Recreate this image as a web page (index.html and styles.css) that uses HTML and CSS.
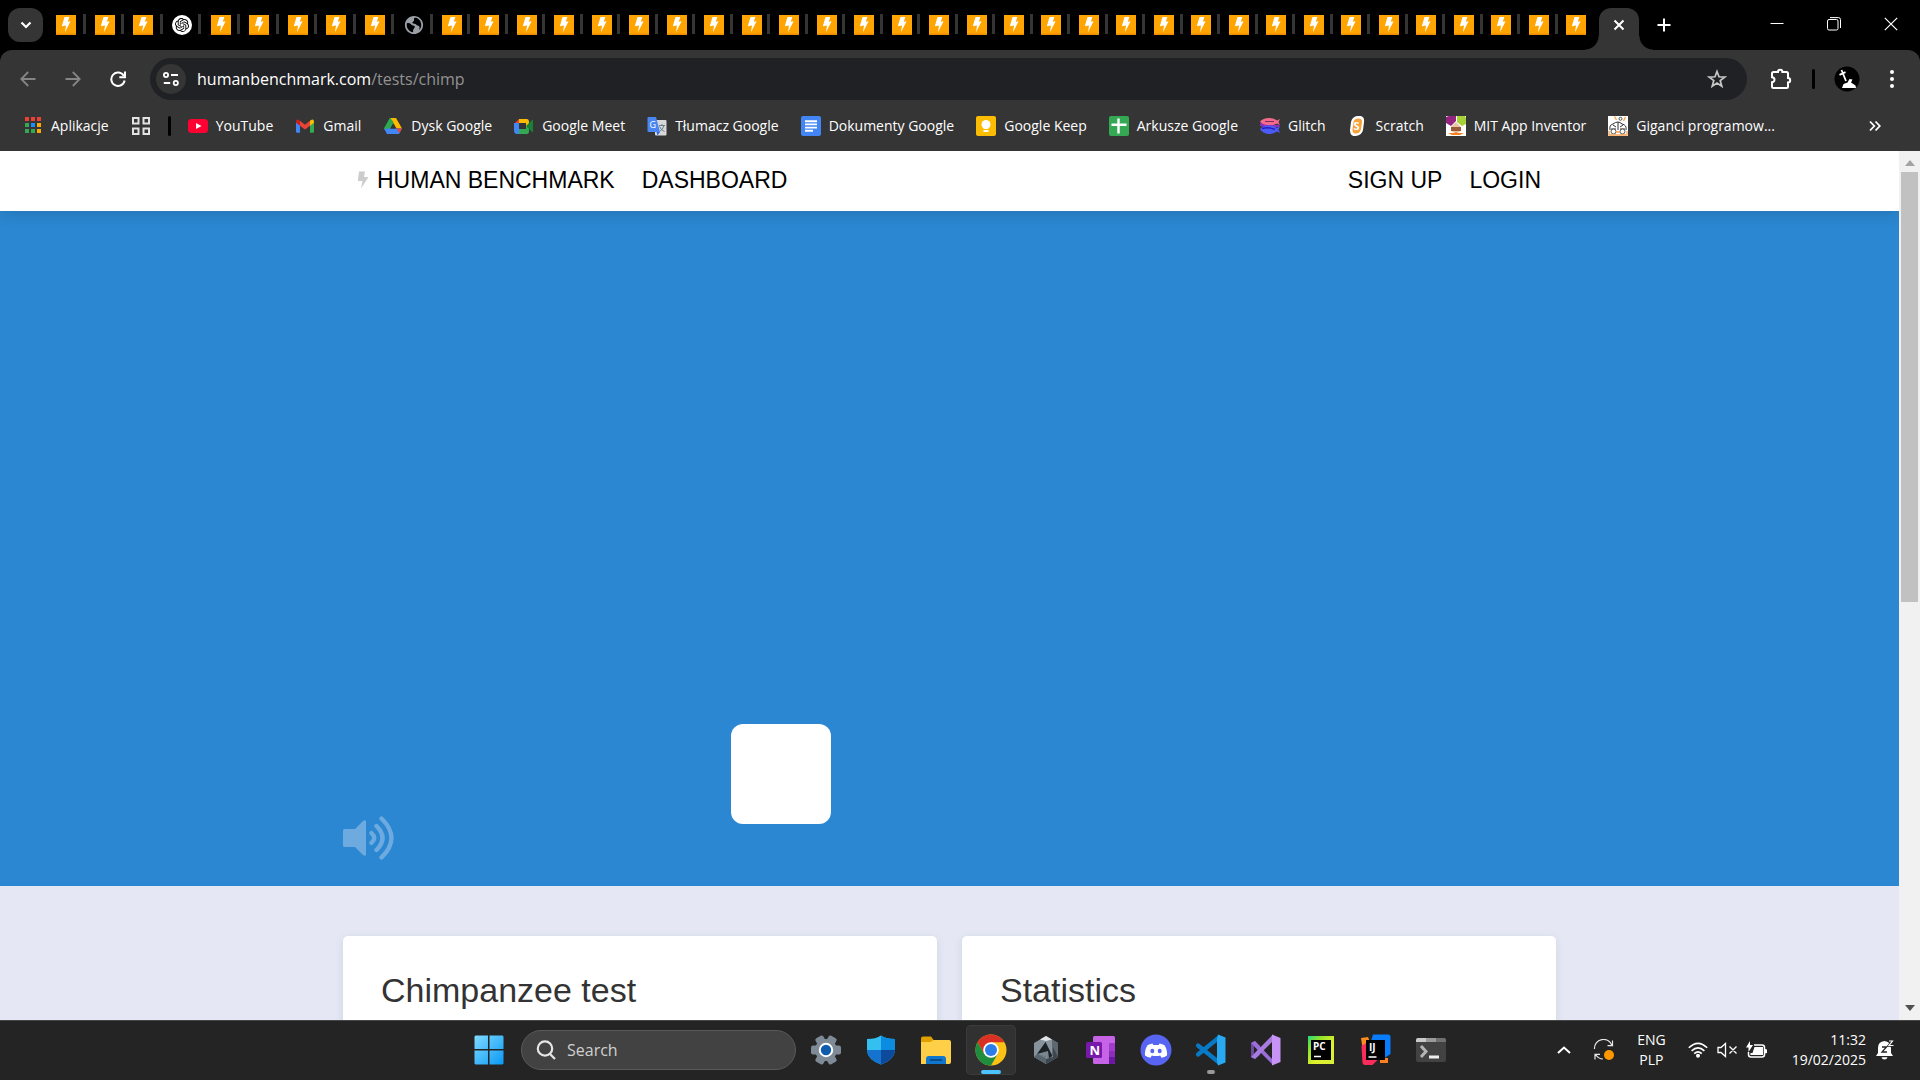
FILE: index.html
```html
<!DOCTYPE html>
<html lang="en">
<head>
<meta charset="utf-8">
<meta name="viewport" content="width=device-width, initial-scale=1">
<title>Human Benchmark</title>
<link rel="stylesheet" href="styles.css">
</head>
<body>
<svg class="sprite" aria-hidden="true">
  <symbol id="fav" viewBox="0 0 20 20"><path fill="#ffa400" d="M0 0h20v20H0z"/><path fill="#f08c00" d="M0 18.500h20V20H0z"/><path fill="#fff" d="M8.500 2h4.800l-1.500 4.800 2.800-.5L9 17.200l1-6.800-4.200.8z"/></symbol>
</svg>

<header class="browser">
  <div class="strip">
    <button class="search-tabs" aria-label="Search tabs"><svg width="12" height="8" viewBox="0 0 12 8"><path d="M1.500 1.500 6 6l4.500-4.500" fill="none" stroke="#fff" stroke-width="2.200"/></svg></button>
    <div class="tabs tabs-wide">
      <button class="tab" aria-label="Tab"><svg class="i20"><use href="#fav"/></svg></button>
      <button class="tab" aria-label="Tab"><svg class="i20"><use href="#fav"/></svg></button>
      <button class="tab" aria-label="Tab"><svg class="i20"><use href="#fav"/></svg></button>
      <button class="tab" aria-label="Tab"><svg class="i20" viewBox="0 0 20 20"><circle cx="10" cy="10" r="10" fill="#fff"/><svg x="3" y="3" width="14" height="14" viewBox="0 0 24 24"><path d="M22.2819 9.8211a5.9847 5.9847 0 0 0-.5157-4.9108 6.0462 6.0462 0 0 0-6.5098-2.9A6.0651 6.0651 0 0 0 4.9807 4.1818a5.9847 5.9847 0 0 0-3.9977 2.9 6.0462 6.0462 0 0 0 .7427 7.0966 5.98 5.98 0 0 0 .511 4.9107 6.051 6.051 0 0 0 6.5146 2.9001A5.9847 5.9847 0 0 0 13.2599 24a6.0557 6.0557 0 0 0 5.7718-4.2058 5.9894 5.9894 0 0 0 3.9977-2.9001 6.0557 6.0557 0 0 0-.7475-7.0729zm-9.022 12.6081a4.4755 4.4755 0 0 1-2.8764-1.0408l.1419-.0804 4.7783-2.7582a.7948.7948 0 0 0 .3927-.6813v-6.7369l2.02 1.1686a.071.071 0 0 1 .038.052v5.5826a4.504 4.504 0 0 1-4.4945 4.4944zm-9.6607-4.1254a4.4708 4.4708 0 0 1-.5346-3.0137l.142.0852 4.783 2.7582a.7712.7712 0 0 0 .7806 0l5.8428-3.3685v2.3324a.0804.0804 0 0 1-.0332.0615L9.74 19.9502a4.4992 4.4992 0 0 1-6.1408-1.6464zM2.3408 7.8956a4.485 4.485 0 0 1 2.3655-1.9728V11.6a.7664.7664 0 0 0 .3879.6765l5.8144 3.3543-2.0201 1.1685a.0757.0757 0 0 1-.071 0l-4.8303-2.7865A4.504 4.504 0 0 1 2.3408 7.872zm16.5963 3.8558L13.1038 8.364 15.1192 7.2a.0757.0757 0 0 1 .071 0l4.8303 2.7913a4.4944 4.4944 0 0 1-.6765 8.1042v-5.6772a.79.79 0 0 0-.407-.667zm2.0107-3.0231l-.142-.0852-4.7735-2.7818a.7759.7759 0 0 0-.7854 0L9.409 9.2297V6.8974a.0662.0662 0 0 1 .0284-.0615l4.8303-2.7866a4.4992 4.4992 0 0 1 6.6802 4.66zM8.3065 12.863l-2.02-1.1638a.0804.0804 0 0 1-.038-.0567V6.0742a4.4992 4.4992 0 0 1 7.3757-3.4537l-.142.0805L8.704 5.459a.7948.7948 0 0 0-.3927.6813zm1.0976-2.3654l2.602-1.4998 2.6069 1.4998v2.9994l-2.5974 1.4997-2.6067-1.4997Z"/></svg></svg></button>
      <button class="tab" aria-label="Tab"><svg class="i20"><use href="#fav"/></svg></button>
      <button class="tab" aria-label="Tab"><svg class="i20"><use href="#fav"/></svg></button>
      <button class="tab" aria-label="Tab"><svg class="i20"><use href="#fav"/></svg></button>
      <button class="tab" aria-label="Tab"><svg class="i20"><use href="#fav"/></svg></button>
      <button class="tab" aria-label="Tab"><svg class="i20"><use href="#fav"/></svg></button>
      <button class="tab" aria-label="Tab"><svg class="i20" viewBox="1 1 22 22"><path fill="#9aa0a6" d="M12 2C6.480 2 2 6.480 2 12s4.480 10 10 10 10-4.480 10-10S17.520 2 12 2zm-1 17.930c-3.950-.49-7-3.850-7-7.930 0-.62.08-1.210.21-1.790 2.800-1 4.300.6 5.200 1.800.6.800 2.500.3 3.300 1.300.9 1.100-.7 1.900-.7 2.600 0 .8-1 1-1 2v2zm6.900-2.540c-.26-.81.300-2 .300-3.100 0-1.800-2.500-1.300-3.600-2.700-1.200-1.500-3.300-.7-4.300-1.900-.8-1 1.700-1.300 1.700-2.300V5c0-.6 1-1 2-.9 3.500.8 6 4 6 7.900 0 2.080-.8 3.970-2.100 5.390z"/></svg></button>
    </div>
    <div class="tabs tabs-narrow">
      <button class="tab" aria-label="Tab"><svg class="i20"><use href="#fav"/></svg></button>
      <button class="tab" aria-label="Tab"><svg class="i20"><use href="#fav"/></svg></button>
      <button class="tab" aria-label="Tab"><svg class="i20"><use href="#fav"/></svg></button>
      <button class="tab" aria-label="Tab"><svg class="i20"><use href="#fav"/></svg></button>
      <button class="tab" aria-label="Tab"><svg class="i20"><use href="#fav"/></svg></button>
      <button class="tab" aria-label="Tab"><svg class="i20"><use href="#fav"/></svg></button>
      <button class="tab" aria-label="Tab"><svg class="i20"><use href="#fav"/></svg></button>
      <button class="tab" aria-label="Tab"><svg class="i20"><use href="#fav"/></svg></button>
      <button class="tab" aria-label="Tab"><svg class="i20"><use href="#fav"/></svg></button>
      <button class="tab" aria-label="Tab"><svg class="i20"><use href="#fav"/></svg></button>
      <button class="tab" aria-label="Tab"><svg class="i20"><use href="#fav"/></svg></button>
      <button class="tab" aria-label="Tab"><svg class="i20"><use href="#fav"/></svg></button>
      <button class="tab" aria-label="Tab"><svg class="i20"><use href="#fav"/></svg></button>
      <button class="tab" aria-label="Tab"><svg class="i20"><use href="#fav"/></svg></button>
      <button class="tab" aria-label="Tab"><svg class="i20"><use href="#fav"/></svg></button>
      <button class="tab" aria-label="Tab"><svg class="i20"><use href="#fav"/></svg></button>
      <button class="tab" aria-label="Tab"><svg class="i20"><use href="#fav"/></svg></button>
      <button class="tab" aria-label="Tab"><svg class="i20"><use href="#fav"/></svg></button>
      <button class="tab" aria-label="Tab"><svg class="i20"><use href="#fav"/></svg></button>
      <button class="tab" aria-label="Tab"><svg class="i20"><use href="#fav"/></svg></button>
      <button class="tab" aria-label="Tab"><svg class="i20"><use href="#fav"/></svg></button>
      <button class="tab" aria-label="Tab"><svg class="i20"><use href="#fav"/></svg></button>
      <button class="tab" aria-label="Tab"><svg class="i20"><use href="#fav"/></svg></button>
      <button class="tab" aria-label="Tab"><svg class="i20"><use href="#fav"/></svg></button>
      <button class="tab" aria-label="Tab"><svg class="i20"><use href="#fav"/></svg></button>
      <button class="tab" aria-label="Tab"><svg class="i20"><use href="#fav"/></svg></button>
      <button class="tab" aria-label="Tab"><svg class="i20"><use href="#fav"/></svg></button>
      <button class="tab" aria-label="Tab"><svg class="i20"><use href="#fav"/></svg></button>
      <button class="tab" aria-label="Tab"><svg class="i20"><use href="#fav"/></svg></button>
      <button class="tab" aria-label="Tab"><svg class="i20"><use href="#fav"/></svg></button>
      <button class="tab" aria-label="Tab"><svg class="i20"><use href="#fav"/></svg></button>
    </div>
    <button class="tab-active" aria-label="Close tab"><svg width="12" height="12" viewBox="0 0 12 12"><path d="m1.500 1.500 9 9m0-9-9 9" stroke="#fff" stroke-width="2"/></svg></button>
    <button class="new-tab" aria-label="New tab"><svg width="14" height="14" viewBox="0 0 14 14"><path d="M7 .5v13M.5 7h13" stroke="#fff" stroke-width="2"/></svg></button>
    <div class="window-controls">
      <button aria-label="Minimize"><svg width="14" height="14" viewBox="0 0 14 14"><path d="M.5 6.500h13" stroke="#fff"/></svg></button>
      <button aria-label="Restore"><svg width="14" height="14" viewBox="0 0 14 14" fill="none" stroke="#fff"><rect x=".5" y="2.500" width="10.500" height="10.500" rx="1.500"/><path d="M3 .6h8.500a2 2 0 0 1 2 2V11"/></svg></button>
      <button aria-label="Close"><svg width="14" height="14" viewBox="0 0 14 14"><path d="m.8.8 12.400 12.400m0-12.400L.8 13.200" stroke="#fff" stroke-width="1.200"/></svg></button>
    </div>
  </div>

  <div class="toolbar">
    <div class="nav-buttons">
      <button aria-label="Back"><svg width="16" height="16" viewBox="0 0 16 16" fill="none" stroke="#858585" stroke-width="1.800"><path d="M15.500 8H1.500M8.200 1 1.300 8l6.900 7"/></svg></button>
      <button aria-label="Forward"><svg width="16" height="16" viewBox="0 0 16 16" fill="none" stroke="#858585" stroke-width="1.800"><path d="M.5 8h14M7.800 1l6.900 7-6.900 7"/></svg></button>
      <button aria-label="Reload"><svg width="16" height="16" viewBox="0 0 16 16" fill="none" stroke="#fff" stroke-width="2"><path d="M13.800 4.800A6.700 6.700 0 1 0 14.600 9.500M15 .5v5.700H9.300"/></svg></button>
    </div>
    <div class="omnibox">
      <button class="site-info" aria-label="Site information"><svg width="16" height="14" viewBox="0 0 16 14" fill="none" stroke="#fff" stroke-width="1.800"><circle cx="3" cy="3" r="2.100"/><path d="M8 3h7M.8 11h6.400"/><circle cx="12.800" cy="11" r="2.100"/></svg></button>
      <a class="url" href="#">humanbenchmark.com<span>/tests/chimp</span></a>
      <button class="star" aria-label="Bookmark this tab"><svg width="20" height="20" viewBox="0 0 20 20" fill="none" stroke="#c7c7c7" stroke-width="1.700"><path d="m10 2.500 2 5.300 5.700.3-4.500 3.500 1.600 5.600L10 14l-4.800 3.200 1.600-5.600-4.500-3.500 5.700-.3z"/></svg></button>
    </div>
    <div class="toolbar-end">
      <button class="ext" aria-label="Extensions"><svg width="22" height="22" viewBox="0 0 22 22"><path d="M2 5.500q0-1.500 1.500-1.500h4.500a2.200 2.200 0 0 1 4.400 0h4.100q1.500 0 1.500 1.500v4.500a2.200 2.200 0 0 1 0 4.400v4.100q0 1.500-1.500 1.500h-13Q2 20 2 18.500v-4.200a2.500 2.500 0 0 0 0-5z" fill="none" stroke="#fff" stroke-width="2"/></svg></button>
      <span class="divider"></span>
      <button class="avatar" aria-label="Profile"><svg width="26" height="26" viewBox="0 0 26 26"><circle cx="13" cy="13" r="12.500" fill="#000"/><path d="M8 22l1.500-4 4-1.500 2-3.500 3 .5-1.500 3 4.500 3 .5 2.500z" fill="#fff"/><path d="m7.500 4 4.500 11M5.500 8.800l6-2.600" stroke="#fff" stroke-width="1.800"/></svg></button>
      <button class="menu" aria-label="Menu"><svg width="6" height="20" viewBox="0 0 6 20" fill="#fff"><circle cx="3" cy="3" r="2"/><circle cx="3" cy="10" r="2"/><circle cx="3" cy="17" r="2"/></svg></button>
    </div>
  </div>

  <nav class="bookmarks" aria-label="Bookmarks">
    <a href="#"><svg class="i20" viewBox="0 0 20 20"><path fill="#ea4335" d="M2 1h4v4H2zM8 1h4v4H8zM14 1h4v4h-4z"/><path fill="#34a853" d="M2 7h4v4H2zM2 13h4v4H2zM8 13h4v4H8z"/><path fill="#1a8cff" d="M8 7h4v4H8z"/><path fill="#fbaa05" d="M14 7h4v4h-4zM14 13h4v4h-4z"/></svg>Aplikacje</a>
    <a href="#" aria-label="Tab groups"><svg class="i20" viewBox="0 0 20 20" fill="none" stroke="#e3e3e3" stroke-width="2"><path d="M2 2h5.500v5.500H2zM12.500 2H18v5.500h-5.500zM2 12.500h5.500V18H2zM12.500 12.500H18V18h-5.500z"/></svg></a>
    <span class="divider"></span>
    <a href="#"><svg class="i20" viewBox="0 0 20 20"><rect y="3" width="20" height="14" rx="3.500" fill="#ff0033"/><path d="m8 7 5.500 3L8 13z" fill="#fff"/></svg>YouTube</a>
    <a href="#"><svg class="i20" viewBox="0 0 20 20"><path fill="#4285f4" d="M1 5.500 5 8v8.800H2.200Q1 16.800 1 15.600z"/><path fill="#34a853" d="M19 5.500 15 8v8.800h2.800q1.200 0 1.200-1.200z"/><path fill="#ea4335" d="m5 4.800 5 3.900 5-3.900v4.900l-5 3.900-5-3.900z"/><path fill="#c5221f" d="M1 5.500q.3-3 3-1.500l1 .8v4.900L1 6.800z"/><path fill="#fbbc04" d="M19 5.500q-.3-3-3-1.500l-1 .8v4.900l4-2.900z"/></svg>Gmail</a>
    <a href="#"><svg class="i20" viewBox="0 0 20 20"><path fill="#2da94f" d="M7 2h3l1.200 4L4.700 16.800 1 12.500z"/><path fill="#ffba00" d="M7.500 2H13l6 10.500h-5.500z"/><path fill="#4285f4" d="M4.500 12.500H19L16 18H4L1 12.500z"/><path fill="#2da94f" d="m1 12.500 3.500 0L10.500 6 7 2z"/><path fill="#ea4335" d="m13.500 12.500 5.500 0-2.500 4.500z"/><path fill="#353535" d="m10 8 2.700 4.500H7.300z"/></svg>Dysk Google</a>
    <a href="#"><svg class="i20" viewBox="0 0 20 20"><path fill="#ea4335" d="M5 3v5H0z"/><path fill="#4285f4" d="M0 7h5v7h0v4H2q-2-1-2-3z"/><path fill="#34a853" d="M5 13h7V9l3 1.500V15q0 3-2 3H5z"/><path fill="#fbbc04" d="M5 3h8q2 0 2 2.500V9l-3 2V7H5z"/><path fill="#188038" d="m12 10 6-6q1 0 1 1v11l-1 0z"/></svg>Google Meet</a>
    <a href="#"><svg class="i20" viewBox="0 0 20 20"><rect x="8" y="4" width="11.500" height="15.500" rx="1" fill="#d8d8d8"/><path d="M12 9.500h6M15 8v1.500m2 0q-1 4-4.500 6m0-5q1.500 3.500 5 5" stroke="#6a7f90" fill="none"/><path d="M1.500 1H9l4 15H1.500Q.5 16 .5 15V2q0-1 1-1z" fill="#4a86f0"/><path d="m9.500 16h3.500l-2.500 3.500z" fill="#3367d6"/><text x="2.500" y="11.500" font-size="9" fill="#fff">G</text></svg>Tłumacz Google</a>
    <a href="#"><svg class="i20" viewBox="0 0 20 20"><rect width="20" height="20" rx="2" fill="#4285f4"/><path d="M4 5.200h12M4 8.400h12M4 11.600h12M4 14.800h8" stroke="#fff" stroke-width="1.900"/></svg>Dokumenty Google</a>
    <a href="#"><svg class="i20" viewBox="0 0 20 20"><rect width="20" height="20" rx="2" fill="#fbbc04"/><circle cx="10" cy="8.500" r="4.500" fill="#fff"/><path d="M7.500 10h5v2.600h-5zM7.500 14h5v2h-5z" fill="#fff"/></svg>Google Keep</a>
    <a href="#"><svg class="i20" viewBox="0 0 20 20"><rect width="20" height="20" rx="2" fill="#34a853"/><path d="M9.500 2.500v15M2.500 8.700h15" stroke="#fff" stroke-width="2.400"/></svg>Arkusze Google</a>
    <a href="#"><svg class="i20" viewBox="0 0 20 20"><path d="M0 5.500Q3 2 9 2q5 0 8 2.500L20 3l-1.500 3L20 9l-3-1.500Q12 10 7 9.500 2 9 0 5.500z" fill="#f66a8c"/><path d="M0 7q7 3.500 19.500 1.500V11L8 12l-8-2z" fill="#8a2fc4"/><path d="M0 13q3-3.500 9-3.500 5 0 8 2.500l3-1.500-1.500 3L20 17l-3-1.500q-4 3-9 2.500-6-1-8-5z" fill="#4b5cf5"/><path d="M2 12.500q7-2 13 1" stroke="#2a1bc0" stroke-width="1.500" fill="none"/><path d="M5 5.500h9" stroke="#5d1a55" stroke-width=".8"/></svg>Glitch</a>
    <a href="#"><svg class="i20" viewBox="0 0 20 20"><path d="M9 0q8-1 7 6l-1 8q-1 5-7 6-6 1-6-6l1-8q1-5 6-6z" fill="#fff"/><path d="M9.500 2.500q5-.5 4.500 3.500l-1 7q-.8 4-4.500 4.500-4.500.5-4-4.500l1-7q.5-3 4-3.500z" fill="#f7a13b"/><text x="5.500" y="14" font-size="11" font-weight="700" fill="#fff">S</text></svg>Scratch</a>
    <a href="#"><svg class="i20" viewBox="0 0 20 20"><path fill="#fff" d="M0 0h20v20H0z"/><path fill="#94257f" d="M0 1l3-1h7v5L5 10 0 7z"/><path fill="#a6cf38" d="M11 0h8l1 2v6l-4 2-5-4z"/><path d="m5 11 5-5 5 5-1 5H6z" fill="#e8c6a5"/><path d="M5 11h10v4H5z" fill="#9a5a38"/><path d="M2 17h5l3-1 3 1h5l-4 2H6z" fill="#f58220"/></svg>MIT App Inventor</a>
    <a href="#"><svg class="i20" viewBox="0 0 20 20"><path fill="#fff" d="M0 0h20v20H0z"/><path d="M2 14q-1-5 3-6 5-4 9 0 5 1 4 6M10 6v8M5 9l3 2m4 0 3-2M3 13h5m4 0h5" fill="none" stroke="#333"/><path d="m8.500 4-2-3.500m9 4.500 2-4" stroke="#f7a13b" stroke-width="1.300"/><circle cx="12.500" cy="2.800" r="1.500" fill="none" stroke="#555"/><circle cx="5.500" cy="15.500" r="2.500" fill="#fff" stroke="#555"/><circle cx="14.500" cy="15.500" r="2.500" fill="#fff" stroke="#555"/><path d="M1 15v4h18v-4M8 16h4" fill="none" stroke="#f9a050" stroke-width="1.300"/></svg>Giganci programow...</a>
    <button class="more" aria-label="More bookmarks"><svg width="12" height="12" viewBox="0 0 12 12" fill="none" stroke="#fff" stroke-width="1.800"><path d="m1 1.500 4.300 4.500L1 10.500m5.500-9L10.800 6l-4.300 4.500"/></svg></button>
  </nav>
</header>

<div class="viewport">
  <main class="page">
    <nav class="site-nav">
      <div class="container">
        <a class="brand" href="#"><svg width="12" height="18" viewBox="0 0 12 18"><path fill="#ccc" d="M2 .5h6L7 6h4.500L4 17.500 5.500 10H.8z"/></svg>HUMAN BENCHMARK</a>
        <a href="#">DASHBOARD</a>
        <a class="push" href="#">SIGN UP</a>
        <a href="#">LOGIN</a>
      </div>
    </nav>
    <section class="game">
      <div class="container board">
        <button class="cell" aria-label="Square"></button>
        <button class="sound" aria-label="Sound"><svg width="52" height="44" viewBox="0 0 52 44"><path d="M1.500 13H12l7.500-7.600q3-2.500 3.500 0v33.200q-.5 2.500-3.500 0L12 31H1.500Q0 31 0 29.500v-15Q0 13 1.500 13z" fill="#6caae0"/><path d="M28.500 17.200q5.500 4.800 0 9.600M33.500 10q12 12 0 24M38.500 2.500q20 19.500 0 39" fill="none" stroke="#6caae0" stroke-width="4.400" stroke-linecap="round"/></svg></button>
      </div>
    </section>
    <section class="container cards">
      <article class="card"><h2>Chimpanzee test</h2></article>
      <article class="card"><h2>Statistics</h2></article>
    </section>
  </main>
  <div class="scrollbar">
    <svg width="10" height="6" viewBox="0 0 10 6"><path fill="#a3a3a3" d="M5 0l5 6H0z"/></svg>
    <div class="track"><div class="thumb"></div></div>
    <svg width="10" height="6" viewBox="0 0 10 6"><path fill="#505050" d="M5 6l5-6H0z"/></svg>
  </div>
</div>

<footer class="taskbar">
  <div class="apps">
    <button class="app" aria-label="Start"><svg width="30" height="30" viewBox="0 0 30 30"><defs><linearGradient id="win" x2="1" y2="1"><stop stop-color="#7fdcff"/><stop offset="1" stop-color="#0a98f5"/></linearGradient></defs><path fill="url(#win)" d="M1.500.5H14V14H.5V1.500zM15.500.5h13l1 1V14h-14zM.5 15.500H14v14H1.500l-1-1zM15.500 15.500h14v13l-1 1h-13z"/></svg></button>
    <label class="search"><svg width="20" height="20" viewBox="0 0 20 20" fill="none" stroke="#e6e6e6" stroke-width="2.200"><circle cx="9" cy="8.500" r="7.200"/><path d="m14 14 5 5"/></svg><input type="text" placeholder="Search" aria-label="Search"></label>
    <button class="app" aria-label="Settings"><svg width="32" height="32" viewBox="0 0 32 32"><g fill="#7e8b97"><circle cx="16" cy="16" r="11"/><rect x="1" y="11.500" width="30" height="9" rx="2"/><rect x="1" y="11.500" width="30" height="9" rx="2" transform="rotate(60 16 16)"/><rect x="1" y="11.500" width="30" height="9" rx="2" transform="rotate(120 16 16)"/></g><circle cx="16" cy="16" r="6.200" fill="#0f5cad" stroke="#fff" stroke-width="2"/></svg></button>
    <button class="app" aria-label="Security"><svg width="30" height="30" viewBox="0 0 30 30"><path fill="#33c0f0" d="M15 .5q5 3.500 14 3.500v12Q28 25 15 29.500 2 25 1 16V4Q10 4 15 .5z"/><path fill="#0c8ce0" d="M15 .5q5 3.500 14 3.500v11H15z"/><path fill="#1373cf" d="M1 15h14v14.500Q2 25 1 16z"/><path fill="#0d4a9c" d="M29 15H15v14.500Q28 25 29 16z"/></svg></button>
    <button class="app" aria-label="File Explorer"><svg width="30" height="30" viewBox="0 0 30 30"><path fill="#dfa000" d="M0 3.500Q0 1.500 2 1.500h8l3 4V12H0z"/><path fill="#ffcf48" d="M0 7h9.500l3-2H28q2 0 2 2v20q0 2-2 2H0z"/><path fill="#1177ce" d="M5 29v-5q0-3 3-3h14q3 0 3 3v5z"/><path d="M9 25h12" stroke="#0b3f7a" stroke-width="1.500"/></svg></button>
    <button class="app current" aria-label="Chrome"><svg width="32" height="32" viewBox="0 0 32 32"><circle cx="16" cy="16" r="15.500" fill="#fbc116"/><path fill="#d93025" d="M2.600 8.200A15.500 15.500 0 0 1 29.400 8.200H16L9.200 20z"/><path fill="#1e8e3e" d="M2.600 8.200A15.500 15.500 0 0 0 16 31.500L22.700 20H9.300z"/><circle cx="16" cy="16" r="7.800" fill="#fff"/><circle cx="16" cy="16" r="6" fill="#2b7de9"/></svg></button>
    <button class="app" aria-label="Unity Hub"><svg width="28" height="30" viewBox="0 0 28 30"><path fill="#87939d" d="M14 1 26 8v14l-12 7L2 22V8z"/><path fill="#dfe5e9" d="M8 4.500 14 1l6 3.500L14 6z"/><path fill="#5d6870" d="m20 4.500 6 3.500v14l-6-2z"/><path fill="#3d464e" d="m26 22-12 7v-5l7-2V12z"/><path fill="#59656e" d="M14 29 2 22l3-3 9 4z"/><path fill="#1d2227" d="m13.500 7 7 14-3 2L5 19z"/><path fill="#7a8690" d="m5 19 11-3 1 7z"/></svg></button>
    <button class="app" aria-label="OneNote"><svg width="30" height="30" viewBox="0 0 30 30"><rect x="7" y="1" width="22" height="28" rx="1.500" fill="#c763e6"/><path fill="#a33bcf" d="M23 8h6v8h-6z"/><path fill="#8c2fb8" d="M23 16h6v6h-6z"/><path fill="#6d17a5" d="M23 22h6v6l-1 1h-5z"/><rect y="7" width="16" height="16" rx="1.500" fill="#7719aa"/><text x="3.500" y="20" font-size="13" font-weight="700" fill="#fff">N</text></svg></button>
    <button class="app" aria-label="Discord"><svg width="32" height="32" viewBox="0 0 32 32"><circle cx="16" cy="16" r="15.500" fill="#5865f2"/><path fill="#fff" d="M12.500 9.500q-3 .5-5 1.800Q4.500 16 5 21.500q2.500 2 5.500 2.300l1.300-2.300q4.200 1 8.400 0l1.300 2.300q3-.3 5.500-2.300.5-5.500-2.500-10.200-2-1.300-5-1.800l-.8 1.400h-5.400z"/><ellipse cx="12.300" cy="17" rx="2" ry="2.300" fill="#5865f2"/><ellipse cx="19.700" cy="17" rx="2" ry="2.300" fill="#5865f2"/></svg></button>
    <button class="app running" aria-label="Visual Studio Code"><svg width="32" height="32" viewBox="0 0 32 32"><path d="M3 20.500 24 3.500M3 11.500l21 17" stroke="#0879c4" stroke-width="4.200" stroke-linecap="round"/><path fill="#29a9f2" d="m23 .5 7.500 3v25l-7.500 3-1-4V5z"/></svg></button>
    <button class="app" aria-label="Visual Studio"><svg width="32" height="32" viewBox="0 0 32 32"><path fill="#6c4a9e" d="m1 9 4-2 5 5v9l-5 4-4-2z"/><path fill="#232423" d="m4 12 3.500 4L4 20z"/><path fill="#9a6ddb" d="M5 7 24 27l-1 4L1 9z"/><path fill="#a77be0" d="M5 25 24 6l-1-5.500L1 23z"/><path fill="#c793f5" d="m22 .5 8.500 3.500v24L22 31.500z"/></svg></button>
    <button class="app" aria-label="PyCharm"><svg width="28" height="30" viewBox="0 0 28 30"><defs><linearGradient id="pc" x2="1" y2="1"><stop stop-color="#21d789"/><stop offset=".25" stop-color="#8be32a"/><stop offset=".6" stop-color="#dff02c"/><stop offset="1" stop-color="#d8f03a"/></linearGradient></defs><path fill="url(#pc)" d="M1 1h26v28H1z"/><path d="M4 5h20v20H4z"/><text x="6" y="15" font-size="10" font-weight="700" fill="#fff">PC</text><path d="M7 21.500h7" stroke="#fff" stroke-width="1.500"/></svg></button>
    <button class="app" aria-label="IntelliJ IDEA"><svg width="32" height="32" viewBox="0 0 32 32"><path fill="#ff8a1f" d="m1 4 7-1 4 10-9 4z"/><path fill="#fb2c5b" d="m1.500 12 6-4 10 18-5 5H5q-2 0-2.500-2z"/><path fill="#fc801d" d="M20 24h8v5h-8z"/><path fill="#087cfa" d="M13 .5h15q2.500 0 2.500 2.500v17l-6 4L11 7z"/><path d="M6 6h19v20H6z"/><text x="9" y="16.500" font-size="10" font-weight="700" fill="#fff">IJ</text><path d="M8.500 23h8" stroke="#fff" stroke-width="1.500"/></svg></button>
    <button class="app" aria-label="Terminal"><svg width="30" height="26" viewBox="0 0 30 26"><rect y="1" width="30" height="24" rx="2" fill="#424242"/><path fill="#c9c9c9" d="M0 3q0-2 2-2h8v4H0z"/><path fill="#999" d="M10 1h10v4H10z"/><path fill="#707070" d="M20 1h8q2 0 2 2v2H20z"/><path d="m5 9 5 5.500L5 20" fill="none" stroke="#b5b5b5" stroke-width="3"/><path d="M13 20h10" stroke="#eee" stroke-width="3"/></svg></button>
  </div>
  <div class="tray">
    <button aria-label="Show hidden icons"><svg width="14" height="8" viewBox="0 0 14 8"><path d="m1 7 6-5.500L13 7" fill="none" stroke="#fff" stroke-width="2"/></svg></button>
    <button class="update" aria-label="Updates"><svg width="22" height="22" viewBox="0 0 22 22"><path d="M1.500 10A9 9 0 0 1 19 6.500M19.500 1.500v5.200h-5M2 20.500v-5.200h5M2.500 15.500q3 4.500 7.500 4.500" fill="none" stroke="#e8e8e8" stroke-width="1.200"/><circle cx="16" cy="16" r="5" fill="#ff9800"/></svg></button>
    <button class="lang">ENG<br>PLP</button>
    <button class="status" aria-label="Network, sound and battery">
      <svg width="20" height="16" viewBox="0 0 20 16" fill="none" stroke="#fff" stroke-width="1.600"><path d="M.8 5.800q9.200-9 18.400 0M3.600 8.800q6.400-6 12.800 0M6.200 11.600q3.800-3.500 7.600 0"/><circle cx="10" cy="13.800" r="1.200" fill="#fff"/></svg>
      <svg width="20" height="16" viewBox="0 0 20 16" fill="none" stroke="#fff" stroke-width="1.300"><path d="M1 5.500h3L8.500 1.500v13L4 10.500H1zM12.500 4.500l7 7m0-7-7 7"/></svg>
      <svg width="22" height="18" viewBox="0 0 22 18"><path d="M8 4h8q2.500 0 2.500 2.500v7Q18.500 16 16 16H5q-2.500 0-2.500-2.500V11" fill="none" stroke="#fff" stroke-width="1.500"/><path fill="#fff" d="M8.500 6h8.500v8H4.500v-2h2zM19 8l2 .5v3.500l-2 .5zM4 0v4h3L2.500 11V6.500H0z"/></svg>
    </button>
    <button class="clock">11:32<br>19/02/2025</button>
    <button class="bell" aria-label="Notifications"><svg width="18" height="20" viewBox="0 0 18 20"><path fill="#fff" d="M2 8q0-6.500 6.500-7 6 .5 6.500 7v5l2 3H0l2-3zM5.500 17.200h6q-.5 2.300-3 2.300t-3-2.300z"/><path d="M6 7h4.500L6 12h5" fill="none" stroke="#222" stroke-width="1.300"/><path d="M13 1h3.500L13 5.500h4.500" fill="none" stroke="#222" stroke-width="2.600"/><path d="M13 1h3.500L13 5.500h4.500" fill="none" stroke="#fff" stroke-width="1.200"/></svg></button>
  </div>
</footer>
</body>
</html>
```
FILE: styles.css
```css
* { box-sizing: border-box; }

body {
  margin: 0;
  height: 100vh;
  display: flex;
  flex-direction: column;
  overflow: hidden;
  background: #000;
  font-family: "Open Sans", "Noto Sans", sans-serif;
}

button {
  margin: 0;
  padding: 0;
  border: 0;
  background: none;
  color: inherit;
  font: inherit;
  display: flex;
  align-items: center;
  justify-content: center;
}

a { color: inherit; text-decoration: none; }
svg { display: block; flex: none; }
.sprite { width: 0; height: 0; position: absolute; }
.i20 { width: 20px; height: 20px; }

/* Browser chrome */
.browser { flex: none; color: #fff; }

.strip { display: flex; height: 50px; padding-left: 8px; }
.search-tabs {
  width: 35px;
  height: 34px;
  margin: 8px 4px 0 0;
  border-radius: 12px;
  background: #353535;
}
.tabs { display: grid; grid-auto-flow: column; grid-auto-columns: 1fr; }
.tabs-wide { width: 386px; }
.tabs-narrow { width: 1162px; }
.tab {
  background: linear-gradient(#353535, #353535) right 14px / 3px 20px no-repeat;
}
.tabs-narrow .tab:last-child { background: none; }
.tab-active {
  position: relative;
  width: 40px;
  height: 42px;
  margin: 8px 0 0 4px;
  border-radius: 12px 12px 0 0;
  background: #353535;
  padding-bottom: 8px;
}
.tab-active::before,
.tab-active::after {
  content: "";
  position: absolute;
  bottom: 0;
  width: 14px;
  height: 14px;
}
.tab-active::before { right: 100%; background: radial-gradient(circle at 0 0, #000 13px, #353535 14px); }
.tab-active::after { left: 100%; background: radial-gradient(circle at 100% 0, #000 13px, #353535 14px); }
.new-tab { width: 50px; }
.window-controls { display: flex; margin-left: auto; padding-right: 1px; }
.window-controls button { width: 57px; height: 48px; }

.toolbar {
  display: flex;
  align-items: center;
  height: 58px;
  padding: 0 0 0 5px;
  background: #353535;
  border-radius: 12px 12px 0 0;
}
.nav-buttons { display: flex; width: 145px; }
.nav-buttons button { width: 45px; height: 40px; }
.omnibox {
  flex: 1;
  display: flex;
  align-items: center;
  height: 42px;
  padding: 0 20px 0 6px;
  border-radius: 21px;
  background: #202124;
}
.site-info { width: 30px; height: 30px; border-radius: 50%; background: #353535; }
.url { margin-left: 11px; font-size: 16px; line-height: 24px; }
.url span { color: #929292; }
.star { margin-left: auto; }
.toolbar-end { display: flex; align-items: center; width: 173px; padding-left: 23px; }
.divider { width: 3px; height: 20px; border-radius: 2px; background: #000; }
.toolbar-end .divider { margin: 0 19px 0 20px; }
.menu { margin-left: 29px; }

.bookmarks {
  display: flex;
  align-items: center;
  gap: 22px;
  height: 43px;
  padding: 0 39px 7px 23px;
  background: #353535;
  font-size: 14px;
  line-height: 20px;
}
.bookmarks a { display: flex; align-items: center; gap: 8px; white-space: nowrap; }
.bookmarks .divider { margin: 0 -5px; }
.more { margin-left: auto; }

/* Web page */
.viewport { flex: 1; min-height: 0; display: flex; }
.page {
  flex: 1;
  overflow: hidden;
  background: #e5e8f4;
  font-family: "Liberation Sans", Arial, sans-serif;
}
.container { width: 100%; max-width: 1213px; margin: 0 auto; }
.site-nav {
  position: relative;
  background: #fff;
  box-shadow: 0 0 16px rgba(0, 0, 0, .2);
}
.site-nav .container {
  display: flex;
  align-items: center;
  gap: 27px;
  height: 60px;
  padding: 0 15px 2px 14px;
  font-size: 23px;
  line-height: 30px;
  color: #000;
}
.brand { display: flex; align-items: center; gap: 8px; }
.push { margin-left: auto; }
.game { background: #2b87d1; }
.board { position: relative; height: 675px; }
.cell {
  position: absolute;
  left: 388px;
  top: 513px;
  width: 100px;
  height: 100px;
  border-radius: 12px;
  background: #fff;
}
.sound { position: absolute; left: 0; bottom: 26px; }
.cards {
  display: grid;
  grid-template-columns: 1fr 1fr;
  gap: 25px;
  padding-top: 50px;
}
.card {
  min-height: 400px;
  padding: 32px 38px;
  border-radius: 5px;
  background: #fff;
  box-shadow: 0 2px 10px rgba(60, 60, 110, .12);
}
.card h2 { margin: 0; font-size: 34px; line-height: 44px; font-weight: 400; color: #333; }

.scrollbar {
  display: flex;
  flex-direction: column;
  align-items: center;
  width: 21px;
  padding: 9px 0;
  background: #f1f1f1;
}
.track { flex: 1; width: 17px; padding: 6px 0; }
.thumb { height: 52%; background: #c1c1c1; }

/* Taskbar */
.taskbar {
  flex: none;
  display: grid;
  grid-template-columns: 1fr auto 1fr;
  align-items: center;
  height: 60px;
  padding-bottom: 1px;
  border-top: 1px solid #454746;
  background: #232423;
  color: #fff;
}
.apps { grid-column: 2; display: flex; gap: 5px; }
.app { position: relative; width: 50px; height: 50px; border-radius: 5px; }
.current { background: #313131; box-shadow: inset 0 0 0 1px #3b3b3b; }
.current::after,
.running::after {
  content: "";
  position: absolute;
  bottom: 1px;
  width: 20px;
  height: 4px;
  border-radius: 2px;
  background: #4cc2ff;
}
.running::after { width: 8px; background: #999; }
.search {
  display: flex;
  align-items: center;
  gap: 11px;
  width: 275px;
  height: 40px;
  margin: 5px 0 5px 2px;
  padding: 0 14px;
  border: 1px solid #5a5a5a;
  border-radius: 20px;
  background: #424242;
}
.search input {
  min-width: 0;
  flex: 1;
  padding: 0;
  border: 0;
  background: none;
  color: #fff;
  font: 16px/24px "Open Sans", sans-serif;
}
.search input::placeholder { color: #d0d0d0; opacity: 1; }
.tray {
  display: flex;
  align-items: center;
  justify-content: flex-end;
  padding-right: 26px;
  font-size: 14px;
  line-height: 20px;
}
.update { margin-left: 22px; }
.lang { margin-left: 22px; text-align: center; }
.status { gap: 9px; margin-left: 22px; }
.clock { margin-left: 24px; text-align: right; }
.bell { margin-left: 10px; }
```
